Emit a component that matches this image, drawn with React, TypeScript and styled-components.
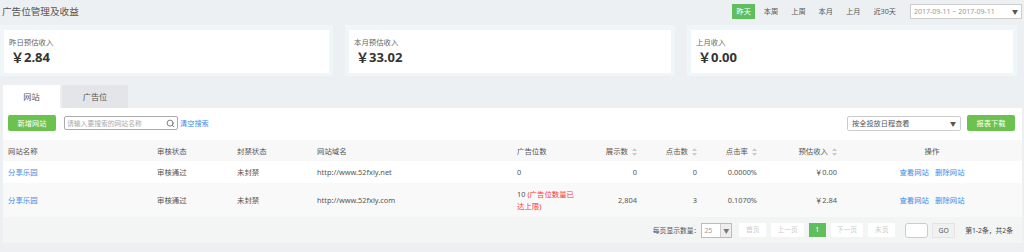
import styled, { createGlobalStyle } from 'styled-components';
import { Search } from 'lucide-react';

const GlobalStyle = createGlobalStyle`
  html, body {
    margin: 0;
    padding: 0;
    background: #edf0f2;
  }
  body {
    font-family: "Noto Sans", "Noto Sans CJK SC", sans-serif;
    color: #555;
  }
`;

const GREEN = '#5fbf5f';
const BLUE = '#3d8ee6';

const Page = styled.div`
  width: 1024px;
  height: 252px;
  overflow: hidden;
`;

const Header = styled.div`
  display: flex;
  align-items: center;
  justify-content: space-between;
  height: 23px;
  padding: 0 2px 0 2px;
`;

const Title = styled.div`
  font-size: 9.6px;
  color: #555;
  margin-top: -2px;
`;

const Filters = styled.div`
  display: flex;
  align-items: center;
  gap: 5px;
  margin-top: -1px;
`;

const FilterBtn = styled.div<{ $active?: boolean }>`
  height: 15px;
  line-height: 15px;
  padding: 0 4px;
  font-size: 7.2px;
  background: ${(p) => (p.$active ? GREEN : 'transparent')};
  color: ${(p) => (p.$active ? '#fff' : '#555')};
`;

const DateBox = styled.div`
  display: flex;
  align-items: center;
  justify-content: space-between;
  width: 104px;
  height: 13px;
  margin-left: 5px;
  padding: 0 3px;
  border: 1px solid #ccc;
  background: #fff;
  font-size: 7px;
  color: #999;
`;

const Caret = styled.span`
  font-size: 6px;
  color: #555;
`;

const Cards = styled.div`
  display: grid;
  grid-template-columns: 333px 330px 330px;
  column-gap: 12px;
  margin-top: 2px;
`;

const Card = styled.div`
  background: #eef6fa;
  padding: 5px 4px 3px 4px;
`;

const CardInner = styled.div`
  background: #fff;
  height: 43px;
  padding: 7px 0 0 5px;
  box-sizing: border-box;
`;

const CardLabel = styled.div`
  font-size: 7.4px;
  color: #666;
  line-height: 10px;
`;

const CardValue = styled.div`
  font-size: 13px;
  font-weight: 700;
  color: #333;
  line-height: 18px;
  margin-top: 1px;
  margin-left: 2px;
`;

const Tabs = styled.div`
  display: flex;
  align-items: flex-end;
  gap: 2px;
  margin-top: 9px;
  padding-left: 3px;
  height: 23px;
`;

const Tab = styled.div<{ $active?: boolean }>`
  height: 23px;
  line-height: 23px;
  text-align: center;
  font-size: 8.2px;
  width: ${(p) => (p.$active ? '57px' : '66px')};
  background: ${(p) => (p.$active ? '#fff' : '#e3e5e9')};
  color: #555;
`;

const Panel = styled.div`
  margin: 0 2px 0 3px;
  background: #fff;
`;

const Toolbar = styled.div`
  display: flex;
  align-items: center;
  height: 16px;
  padding: 7px 7px 0 5px;
`;

const GreenButton = styled.div`
  width: 48px;
  height: 16px;
  line-height: 16px;
  text-align: center;
  font-size: 7.2px;
  color: #fff;
  background: #6cc24f;
  border-radius: 2px;
`;

const SearchBox = styled.div`
  display: flex;
  align-items: center;
  justify-content: space-between;
  width: 108px;
  height: 12px;
  margin-left: 8px;
  padding: 0 2px;
  border: 1px solid #aaa;
  border-radius: 2px;
  font-size: 6.8px;
  color: #aaa;
`;

const ClearLink = styled.span`
  margin-left: 2px;
  font-size: 7.2px;
  color: ${BLUE};
`;

const Spacer = styled.div`
  flex: 1;
`;

const SelectBox = styled.div`
  display: flex;
  align-items: center;
  justify-content: space-between;
  width: 104px;
  height: 13px;
  padding: 0 4px;
  border: 1px solid #ccc;
  border-radius: 2px;
  font-size: 7.2px;
  color: #555;
  margin-right: 6px;
`;

const Table = styled.table`
  width: 100%;
  margin-top: 9px;
  border-collapse: collapse;
  table-layout: fixed;
  font-size: 7.4px;
  color: #555;
`;

const Th = styled.th<{ $align?: string }>`
  font-weight: 400;
  text-align: ${(p) => p.$align || 'left'};
  padding: 0 5px;
  height: 21px;
  background: #f8f8f8;
  white-space: nowrap;
`;

const Row = styled.tr<{ $striped?: boolean }>`
  background: ${(p) => (p.$striped ? '#f9f9f9' : '#fff')};
`;

const Td = styled.td<{ $align?: string }>`
  text-align: ${(p) => p.$align || 'left'};
  padding: 5px 5px;
  line-height: 12px;
  vertical-align: middle;
`;

const Link = styled.span`
  color: ${BLUE};
`;

const Red = styled.span`
  color: #f33;
`;

const ActionLink = styled.span`
  color: ${BLUE};
  margin: 0 3px;
`;

const SortIcon = styled.svg`
  display: inline-block;
  vertical-align: middle;
  margin-left: 4px;
  margin-top: -1px;
`;

const Pager = styled.div`
  display: flex;
  align-items: center;
  justify-content: flex-end;
  height: 26px;
  padding-right: 9px;
  background: #f3f4f4;
  font-size: 6.8px;
  color: #555;
`;

const PageSize = styled.div`
  display: flex;
  align-items: stretch;
  height: 13px;
  margin-left: 1px;
  border: 1px solid #bbb;
  background: #fff;
  color: #999;
`;

const PageSizeValue = styled.span`
  width: 16px;
  padding-left: 2px;
  line-height: 13px;
`;

const PageSizeArrow = styled.span`
  width: 10px;
  display: flex;
  align-items: center;
  justify-content: center;
  background: #eee;
  border-left: 1px solid #ccc;
  color: #777;
  font-size: 6px;
`;

const PageBtns = styled.div`
  display: flex;
  gap: 5px;
  margin-left: 7px;
`;

const PageBtn = styled.div<{ $active?: boolean }>`
  height: 14px;
  line-height: 14px;
  padding: 0 ${(p) => (p.$active ? '6px' : '6px')};
  min-width: ${(p) => (p.$active ? '5px' : '15px')};
  text-align: center;
  background: ${(p) => (p.$active ? GREEN : '#fff')};
  color: ${(p) => (p.$active ? '#fff' : '#ccc')};
`;

const GoInput = styled.div`
  width: 21px;
  height: 13px;
  margin-left: 10px;
  border: 1px solid #ccc;
  border-radius: 3px;
  background: #fff;
`;

const GoBtn = styled.div`
  width: 21px;
  height: 13px;
  line-height: 13px;
  margin-left: 4px;
  text-align: center;
  border: 1px solid #e4e4e4;
  background: #f1f1f1;
  color: #555;
`;

const Summary = styled.span`
  margin-left: 10px;
  color: #444;
`;

const Sort = () => (
  <SortIcon width="5" height="8" viewBox="0 0 5 8">
    <path d="M2.5 0 L5 3 L0 3 Z" fill="#ccc" />
    <path d="M0 5 L5 5 L2.5 8 Z" fill="#ccc" />
  </SortIcon>
);

const filters = ['昨天', '本周', '上周', '本月', '上月', '近30天'];

const cards = [
  { label: '昨日预估收入', value: '￥2.84' },
  { label: '本月预估收入', value: '￥33.02' },
  { label: '上月收入', value: '￥0.00' },
];

const rows = [
  { name: '分享乐园', audit: '审核通过', ban: '未封禁', domain: 'http://www.52fxly.net', slots: '0', full: false, views: '0', clicks: '0', rate: '0.0000%', income: '￥0.00' },
  { name: '分享乐园', audit: '审核通过', ban: '未封禁', domain: 'http://www.52fxly.com', slots: '10 ', full: true, views: '2,804', clicks: '3', rate: '0.1070%', income: '￥2.84' },
];

export default function App() {
  return (
    <Page>
      <GlobalStyle />
      <Header>
        <Title>广告位管理及收益</Title>
        <Filters>
          {filters.map((f, i) => (
            <FilterBtn key={f} $active={i === 0}>
              {f}
            </FilterBtn>
          ))}
          <DateBox>
            <span>2017-09-11 ~ 2017-09-11</span>
            <Caret>▼</Caret>
          </DateBox>
        </Filters>
      </Header>

      <Cards>
        {cards.map((c) => (
          <Card key={c.label}>
            <CardInner>
              <CardLabel>{c.label}</CardLabel>
              <CardValue>{c.value}</CardValue>
            </CardInner>
          </Card>
        ))}
      </Cards>

      <Tabs>
        <Tab $active>网站</Tab>
        <Tab>广告位</Tab>
      </Tabs>

      <Panel>
        <Toolbar>
          <GreenButton>新增网站</GreenButton>
          <SearchBox>
            <span>请输入要搜索的网站名称</span>
            <Search size={9} color="#555" strokeWidth={2} />
          </SearchBox>
          <ClearLink>清空搜索</ClearLink>
          <Spacer />
          <SelectBox>
            <span>按全投放日程查看</span>
            <Caret>▼</Caret>
          </SelectBox>
          <GreenButton>报表下载</GreenButton>
        </Toolbar>

        <Table>
          <colgroup>
            <col style={{ width: 149 }} />
            <col style={{ width: 80 }} />
            <col style={{ width: 80 }} />
            <col style={{ width: 200 }} />
            <col style={{ width: 68 }} />
            <col style={{ width: 62 }} />
            <col style={{ width: 60 }} />
            <col style={{ width: 60 }} />
            <col style={{ width: 80 }} />
            <col />
          </colgroup>
          <thead>
            <tr>
              <Th>网站名称</Th>
              <Th>审核状态</Th>
              <Th>封禁状态</Th>
              <Th>网站域名</Th>
              <Th>广告位数</Th>
              <Th $align="right">展示数<Sort /></Th>
              <Th $align="right">点击数<Sort /></Th>
              <Th $align="right">点击率<Sort /></Th>
              <Th $align="right">预估收入<Sort /></Th>
              <Th $align="center">操作</Th>
            </tr>
          </thead>
          <tbody>
            {rows.map((r, i) => (
              <Row key={r.domain} $striped={i % 2 === 1}>
                <Td><Link>{r.name}</Link></Td>
                <Td>{r.audit}</Td>
                <Td>{r.ban}</Td>
                <Td>{r.domain}</Td>
                <Td>
                  {r.slots}
                  {r.full && <Red>(广告位数量已达上限)</Red>}
                </Td>
                <Td $align="right">{r.views}</Td>
                <Td $align="right">{r.clicks}</Td>
                <Td $align="right">{r.rate}</Td>
                <Td $align="right">{r.income}</Td>
                <Td $align="center">
                  <ActionLink>查看网站</ActionLink>
                  <ActionLink>删除网站</ActionLink>
                </Td>
              </Row>
            ))}
          </tbody>
        </Table>

        <Pager>
          <span>每页显示数量：</span>
          <PageSize>
            <PageSizeValue>25</PageSizeValue>
            <PageSizeArrow>▼</PageSizeArrow>
          </PageSize>
          <PageBtns>
            <PageBtn>首页</PageBtn>
            <PageBtn>上一页</PageBtn>
            <PageBtn $active>1</PageBtn>
            <PageBtn>下一页</PageBtn>
            <PageBtn>末页</PageBtn>
          </PageBtns>
          <GoInput />
          <GoBtn>GO</GoBtn>
          <Summary>第1-2条，共2条</Summary>
        </Pager>
      </Panel>
    </Page>
  );
}
